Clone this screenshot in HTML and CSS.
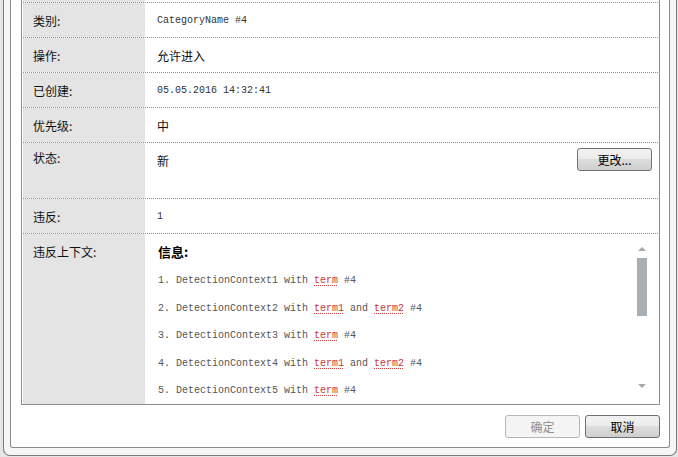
FILE: index.html
```html
<!DOCTYPE html>
<html lang="zh">
<head>
<meta charset="utf-8">
<title>详细信息</title>
<link rel="stylesheet" href="styles.css">
</head>
<body>
<div class="outer">
  <div class="inner">
    <div class="panel">
      <div class="row row-stub">
        <div class="label"></div>
        <div class="value"></div>
      </div>
      <div class="row">
        <div class="label">类别:</div>
        <div class="value mono">CategoryName #4</div>
      </div>
      <div class="row">
        <div class="label">操作:</div>
        <div class="value">允许进入</div>
      </div>
      <div class="row">
        <div class="label">已创建:</div>
        <div class="value mono">05.05.2016 14:32:41</div>
      </div>
      <div class="row">
        <div class="label">优先级:</div>
        <div class="value">中</div>
      </div>
      <div class="row row-status">
        <div class="label label-top">状态:</div>
        <div class="value value-status">
          <span class="status-text">新</span>
          <button class="btn btn-change">更改...</button>
        </div>
      </div>
      <div class="row">
        <div class="label">违反:</div>
        <div class="value mono">1</div>
      </div>
      <div class="row row-context">
        <div class="label label-ctx">违反上下文:</div>
        <div class="value value-ctx">
          <div class="ctx-body">
            <div class="ctx-title">信息:</div>
            <ol class="ctx-list mono">
              <li>1. DetectionContext1 with <span class="term">term</span> #4</li>
              <li>2. DetectionContext2 with <span class="term">term1</span> and <span class="term">term2</span> #4</li>
              <li>3. DetectionContext3 with <span class="term">term</span> #4</li>
              <li>4. DetectionContext4 with <span class="term">term1</span> and <span class="term">term2</span> #4</li>
              <li>5. DetectionContext5 with <span class="term">term</span> #4</li>
            </ol>
          </div>
          <div class="scrollbar">
            <div class="sb-btn"><span class="arrow-up"></span></div>
            <div class="sb-thumb"></div>
            <div class="sb-space"></div>
            <div class="sb-btn"><span class="arrow-down"></span></div>
          </div>
        </div>
      </div>
    </div>
    <div class="actions">
      <button class="btn" disabled>确定</button>
      <button class="btn">取消</button>
    </div>
  </div>
</div>
</body>
</html>
```

FILE: styles.css
```css
html, body {
  margin: 0;
  padding: 0;
}
body {
  background: #e6e6e6;
  width: 678px;
  height: 457px;
  overflow: hidden;
  font-family: "Noto Sans CJK SC", "Liberation Sans", sans-serif;
  font-size: 12px;
  color: #000;
}
.outer {
  margin: 0 1px 1px 3px;
  border: 1px solid #7b7b7b;
  border-top: none;
  border-radius: 0 0 7px 7px;
  background: #f6f6f6;
  padding: 0 6px 7px 6px;
}
.inner {
  border: 1px solid #8a8a8a;
  border-top: none;
  border-radius: 0 0 3px 3px;
  background: #fff;
  padding: 0 9px 9px 10px;
}
.panel {
  border: 1px solid #8e8f8f;
  border-top: none;
  padding: 0 1px;
  background: #fff;
}
.row {
  display: grid;
  grid-template-columns: 122px 1fr;
  border-bottom: 1px dotted #8f8f8f;
}
.row-context {
  border-bottom: none;
}
.label {
  background: #e4e4e4;
  height: 34px;
  box-sizing: border-box;
  padding: 2px 0 0 10px;
  display: flex;
  align-items: center;
  line-height: 16px;
  color: #111;
}
.value {
  height: 34px;
  box-sizing: border-box;
  padding: 2px 0 0 12px;
  display: flex;
  align-items: center;
  line-height: 16px;
  color: #111;
}
.row-stub .label,
.row-stub .value {
  height: 2px;
  padding: 0;
}
.mono {
  font-family: "Liberation Mono", "DejaVu Sans Mono", monospace;
  font-size: 10px;
  color: #333;
}
.row-status .label,
.row-status .value {
  height: 55px;
}
.label-top {
  align-items: flex-start;
  padding-top: 7px;
}
.value-status {
  align-items: flex-start;
  justify-content: space-between;
  padding-top: 0;
}
.status-text {
  margin-top: 10px;
}
.btn {
  width: 75px;
  height: 23px;
  box-sizing: border-box;
  border: 1px solid #707070;
  border-radius: 3px;
  background: linear-gradient(#f2f2f2 0%, #ebebeb 50%, #dddddd 50%, #cfcfcf 100%);
  font-family: "Noto Sans CJK SC", "Liberation Sans", sans-serif;
  font-size: 12px;
  line-height: 19px;
  color: #000;
  padding: 0;
}
.btn:disabled {
  border-color: #b6b6b6;
  background: #f4f4f4;
  color: #8d8d8d;
}
.btn-change {
  margin: 5px 6px 0 0;
}
.row-context .label,
.row-context .value {
  height: 170px;
}
.label-ctx {
  align-items: flex-start;
  padding-top: 10px;
}
.value-ctx {
  display: grid;
  grid-template-columns: 1fr 14px;
  align-items: start;
  padding: 0 9px 0 13px;
}
.ctx-body {
  height: 170px;
  overflow: hidden;
  padding-top: 9px;
  box-sizing: border-box;
}
.ctx-title {
  font-weight: bold;
  font-size: 13px;
  line-height: 18px;
  color: #000;
}
.ctx-list {
  list-style: none;
  margin: 0;
  padding: 6px 0 0 0;
  color: #555;
}
.ctx-list li {
  line-height: 27.5px;
  white-space: nowrap;
}
.term {
  color: #c8343a;
  text-decoration: underline dotted #d23c3c;
  text-underline-offset: 2px;
}
.scrollbar {
  margin-top: 6px;
  height: 154px;
  display: flex;
  flex-direction: column;
  align-items: center;
}
.sb-btn {
  height: 17px;
  width: 14px;
  display: flex;
  align-items: center;
  justify-content: center;
}
.arrow-up {
  width: 0;
  height: 0;
  border-left: 4px solid transparent;
  border-right: 4px solid transparent;
  border-bottom: 4px solid #a8a8a8;
}
.arrow-down {
  width: 0;
  height: 0;
  border-left: 4px solid transparent;
  border-right: 4px solid transparent;
  border-top: 4px solid #a8a8a8;
}
.sb-thumb {
  margin-top: 1px;
  width: 10px;
  height: 58px;
  background: #a7aeb4;
}
.sb-space {
  flex: 1;
}
.actions {
  display: flex;
  justify-content: flex-end;
  gap: 5px;
  margin-top: 10px;
}
```
